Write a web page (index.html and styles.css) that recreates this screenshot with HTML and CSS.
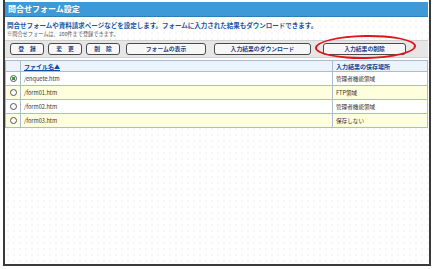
FILE: index.html
```html
<!DOCTYPE html>
<html lang="ja">
<head>
    <meta charset="UTF-8">
    <title>問合せフォーム設定</title>
    <link rel="stylesheet" href="styles.css">
</head>
<body>
    <div class="window">
        <div class="title-bar">問合せフォーム設定</div>
        <p class="desc">問合せフォームや資料請求ページなどを設定します。フォームに入力された結果もダウンロードできます。</p>
        <p class="note">※問合せフォームは、100件まで登録できます。</p>

        <div class="toolbar">
            <button class="btn btn-short">登　録</button>
            <button class="btn btn-short">変　更</button>
            <button class="btn btn-short">削　除</button>
            <button class="btn btn-show">フォームの表示</button>
            <button class="btn btn-dl">入力結果のダウンロード</button>
            <button class="btn btn-del">入力結果の削除</button>
            <div class="mark"></div>
        </div>

        <table class="list">
            <tr class="head">
                <th class="col-radio"></th>
                <th class="col-file"><a href="#">ファイル名▲</a></th>
                <th class="col-store">入力結果の保存場所</th>
            </tr>
            <tr>
                <td class="col-radio"><span class="radio checked"></span></td>
                <td>/enquete.htm</td>
                <td>管理者機能領域</td>
            </tr>
            <tr class="alt">
                <td class="col-radio"><span class="radio"></span></td>
                <td>/form01.htm</td>
                <td>FTP領域</td>
            </tr>
            <tr>
                <td class="col-radio"><span class="radio"></span></td>
                <td>/form02.htm</td>
                <td>管理者機能領域</td>
            </tr>
            <tr class="alt">
                <td class="col-radio"><span class="radio"></span></td>
                <td>/form03.htm</td>
                <td>保存しない</td>
            </tr>
        </table>
    </div>
</body>
</html>
```

FILE: styles.css
```css
body {
    margin: 0;
    background: #fff;
    font-family: "Noto Sans CJK JP", "Noto Sans", sans-serif;
}

.window {
    position: relative;
    box-sizing: border-box;
    width: 428px;
    height: 266px;
    margin-left: 3px;
    padding: 2px 1px 0 0;
    border: 2px solid #3a3a3a;
    border-top: 0;
    background-color: #fff;
    background-image: radial-gradient(circle, #f6f6f6 1px, transparent 1.2px);
    background-size: 6px 6px;
}

.title-bar {
    height: 14px;
    line-height: 14px;
    padding-left: 3px;
    background: #3d9ad6; /* blue header */
    border-bottom: 1px solid #2a7fb8;
    color: #fff;
    font-size: 8px;
    font-weight: bold;
}

.desc {
    margin: 3px 0 0 2px;
    line-height: 10px;
    color: #1756a8;
    font-size: 6.5px;
    font-weight: bold;
    white-space: nowrap;
}

.note {
    margin: 0 0 0 2px;
    line-height: 8px;
    color: #555;
    font-size: 5.2px;
    white-space: nowrap;
}

.toolbar {
    display: flex;
    align-items: center;
    height: 16px;
    margin-top: 2px;
    padding-left: 5px;
    background: #e6e6e6;
    border-top: 1px solid #d0d0d0;
    border-bottom: 1px solid #d0d0d0;
}

.btn {
    height: 12px;
    padding: 0;
    margin-right: 4px;
    border: 1px solid #4a4a4a;
    border-radius: 3px;
    background: #f7f7f7;
    color: #1c3f8a;
    font-family: inherit;
    font-size: 5.8px;
    font-weight: bold;
    line-height: 10px;
}

.btn-short { width: 34px; }
.btn-show { width: 80px; margin-left: 2px; margin-right: 8px; }
.btn-dl { width: 97px; margin-right: 12px; }
.btn-del { width: 83px; }

.mark {
    position: absolute;
    left: 310px;
    top: 35px;
    width: 97px;
    height: 20px;
    border: 2px solid #e0141c;
    border-radius: 50%;
    transform: rotate(-1deg);
}

.list {
    width: 100%;
    margin-top: 2px;
    border-collapse: collapse;
    font-size: 5.6px;
    color: #333;
    background: #fff;
}

.list td,
.list th {
    height: 13px;
    padding: 0 3px;
    border: 1px solid #a9bcd0;
    text-align: left;
    white-space: nowrap;
}

.list .head th {
    height: 10px;
    background: #edf3fa;
    color: #0b4a9c;
    font-weight: bold;
    font-size: 6px;
}

.list .head a {
    color: #0b4a9c;
}

.list .alt td {
    background: #ffffdd; /* yellow rows */
}

.col-radio {
    width: 8px;
    text-align: center !important;
}

.col-store {
    width: 88px;
}

.radio {
    display: inline-block;
    box-sizing: border-box;
    width: 7px;
    height: 7px;
    border: 1px solid #555;
    border-radius: 50%;
    background: #fff;
    vertical-align: middle;
}

.radio.checked {
    background: radial-gradient(circle, #3a9a3a 1.6px, #fff 2px);
}
```
